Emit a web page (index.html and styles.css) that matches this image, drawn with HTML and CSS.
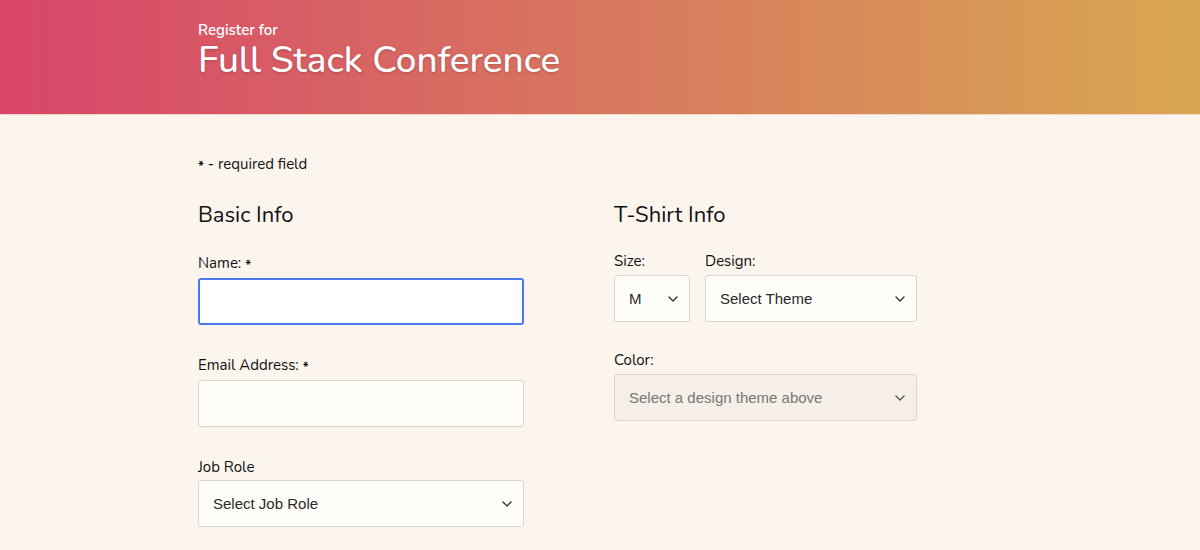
FILE: index.html
```html
<!DOCTYPE html>
<html>
<head>
<meta charset="utf-8">
<link rel="stylesheet" href="styles.css">
</head>
<body>
<header class="hero">
  <div class="wrap">
    <p class="kicker">Register for</p>
    <h1 class="title">Full Stack Conference</h1>
  </div>
</header>
<main class="wrap">
  <p class="note"><span class="ast">*</span> - required field</p>
  <div class="cols">
    <section class="col left">
      <h2 class="sec">Basic Info</h2>
      <div class="field">
        <label class="lbl">Name: <span class="ast">*</span></label>
        <div class="box focus"></div>
      </div>
      <div class="field">
        <label class="lbl">Email Address: <span class="ast">*</span></label>
        <div class="box"></div>
      </div>
      <div class="field job">
        <label class="lbl">Job Role</label>
        <div class="box sel"><span>Select Job Role</span><svg class="chev" viewBox="0 0 10 6"><path d="M1 1l4 4 4-4" fill="none" stroke="#333" stroke-width="1.4" stroke-linecap="round" stroke-linejoin="round"/></svg></div>
      </div>
    </section>
    <section class="col right">
      <h2 class="sec">T-Shirt Info</h2>
      <div class="row">
        <div class="field size">
          <label class="lbl">Size:</label>
          <div class="box sel"><span>M</span><svg class="chev" viewBox="0 0 10 6"><path d="M1 1l4 4 4-4" fill="none" stroke="#333" stroke-width="1.4" stroke-linecap="round" stroke-linejoin="round"/></svg></div>
        </div>
        <div class="field design">
          <label class="lbl">Design:</label>
          <div class="box sel"><span>Select Theme</span><svg class="chev" viewBox="0 0 10 6"><path d="M1 1l4 4 4-4" fill="none" stroke="#333" stroke-width="1.4" stroke-linecap="round" stroke-linejoin="round"/></svg></div>
        </div>
      </div>
      <div class="field color">
        <label class="lbl">Color:</label>
        <div class="box sel dis"><span>Select a design theme above</span><svg class="chev" viewBox="0 0 10 6"><path d="M1 1l4 4 4-4" fill="none" stroke="#555" stroke-width="1.4" stroke-linecap="round" stroke-linejoin="round"/></svg></div>
      </div>
    </section>
  </div>
</main>
</body>
</html>
```
FILE: styles.css
```css
html, body { margin: 0; padding: 0; }
body {
  background: #fcf5ee;
  font-family: "Nunito", "Lato", "Noto Sans", sans-serif;
  color: #111;
  overflow: hidden;
}
.wrap { width: 804px; margin: 0 auto; box-sizing: border-box; }
.hero {
  height: 114px;
  background: linear-gradient(90deg, #d8456a 0%, #d8775f 50%, #d8a752 100%);
  border-bottom: 1px solid #f0d8c8;
}
.hero .wrap { padding-top: 22px; }
.kicker { margin: 0; color: #fff; font-size: 15px; font-weight: 600; line-height: 16px; }
.title {
  margin: 4px 0 0; color: #fff; font-size: 37px; font-weight: 500; line-height: 37px;
  text-shadow: 0 1px 3px rgba(0,0,0,0.2);
}
.note { margin: 39px 0 0; font-size: 15px; line-height: 20px; }
.ast { font-size: 13px; font-weight: 700; line-height: 0; vertical-align: -2px; }
.cols { display: flex; gap: 90px; margin-top: 27px; }
.col.left { width: 326px; }
.col.right { width: 303px; }
.sec { margin: 0; font-size: 22px; font-weight: 400; line-height: 28px; }
.field { display: flex; flex-direction: column; }
.lbl { font-size: 15px; line-height: 20px; }
.left .field { margin-top: 24px; }
.left .field + .field { margin-top: 30px; }
.left .field.job { margin-top: 30px; }
.left .lbl { margin-bottom: 5px; }
.left .job .lbl { margin-bottom: 3px; }
.box {
  height: 47px; box-sizing: border-box;
  border: 1px solid #d9d5cf; border-radius: 3px;
  background: #fffdf8;
}
.box.focus { background: #fff; border: 2px solid #4a78f0; }
.sel {
  display: flex; align-items: center; justify-content: space-between;
  padding: 0 11px 0 14px;
  font-family: "Liberation Sans", Arial, sans-serif; font-size: 15px; color: #2a2a2a;
}
.chev { width: 10px; height: 6px; }
.dis { background: #f5efe8; color: #777; }
.row { display: flex; gap: 15px; margin-top: 22px; }
.right .lbl { margin-bottom: 4px; }
.size { width: 76px; }
.design { width: 212px; }
.color { margin-top: 28px; }
.color .box { width: 303px; }
```
